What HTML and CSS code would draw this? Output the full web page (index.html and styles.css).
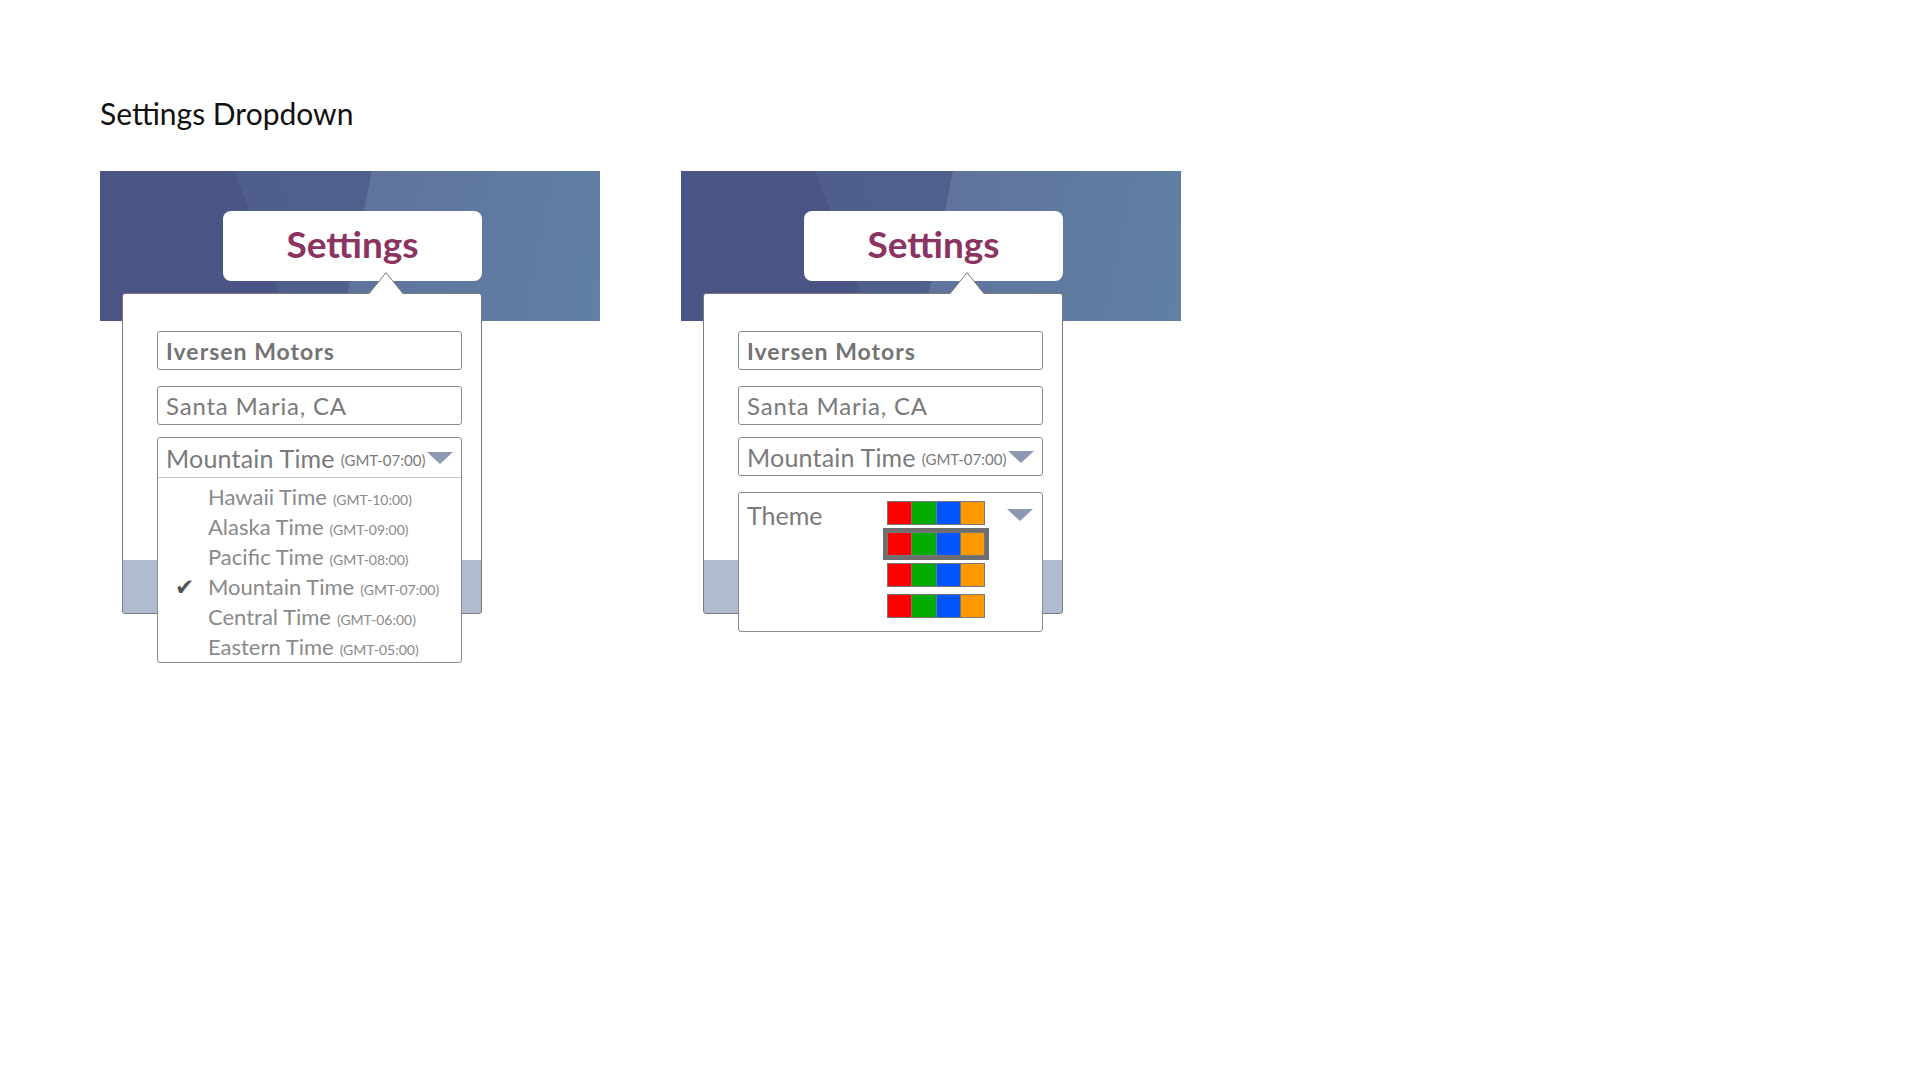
FILE: index.html
```html
<!DOCTYPE html>
<html lang="en">
<head>
<meta charset="utf-8">
<title>Settings Dropdown</title>
<link rel="stylesheet" href="styles.css">
</head>
<body>
<div class="page">
  <h1 class="title">Settings Dropdown</h1>
  <div class="demos">
    <div class="demo">
      <div class="banner">
        <div class="settings-btn">Settings</div>
      </div>
      <div class="panel">
        <svg class="caret" width="34" height="22" viewBox="0 0 34 22"><polygon points="0,22 17,0.5 34,22" fill="#fff"/><polyline points="0,21.5 17,0.7 34,21.5" fill="none" stroke="#7a7a7a" stroke-width="1"/></svg>
        <div class="field field-bold">Iversen Motors</div>
        <div class="field field-gap">Santa Maria, CA</div>
        <div class="select open">
          <div class="select-head"><span class="big">Mountain Time</span><span class="gmt">(GMT-07:00)</span><span class="tri"></span></div>
          <ul class="options">
            <li class="opt"><span class="check"></span>Hawaii Time <span class="gmt-s">(GMT-10:00)</span></li>
            <li class="opt"><span class="check"></span>Alaska Time <span class="gmt-s">(GMT-09:00)</span></li>
            <li class="opt"><span class="check"></span>Pacific Time <span class="gmt-s">(GMT-08:00)</span></li>
            <li class="opt"><span class="check">&#10004;</span>Mountain Time <span class="gmt-s">(GMT-07:00)</span></li>
            <li class="opt"><span class="check"></span>Central Time <span class="gmt-s">(GMT-06:00)</span></li>
            <li class="opt"><span class="check"></span>Eastern Time <span class="gmt-s">(GMT-05:00)</span></li>
          </ul>
        </div>
      </div>
    </div>
    <div class="demo">
      <div class="banner">
        <div class="settings-btn">Settings</div>
      </div>
      <div class="panel">
        <svg class="caret" width="34" height="22" viewBox="0 0 34 22"><polygon points="0,22 17,0.5 34,22" fill="#fff"/><polyline points="0,21.5 17,0.7 34,21.5" fill="none" stroke="#7a7a7a" stroke-width="1"/></svg>
        <div class="field field-bold">Iversen Motors</div>
        <div class="field field-gap">Santa Maria, CA</div>
        <div class="select">
          <div class="select-head"><span class="big">Mountain Time</span><span class="gmt">(GMT-07:00)</span><span class="tri"></span></div>
        </div>
        <div class="theme">
          <span class="theme-label">Theme</span>
          <div class="swatches">
            <div class="swatch"><i class="c-red"></i><i class="c-green"></i><i class="c-blue"></i><i class="c-orange"></i></div>
            <div class="swatch selected"><i class="c-red"></i><i class="c-green"></i><i class="c-blue"></i><i class="c-orange"></i></div>
            <div class="swatch"><i class="c-red"></i><i class="c-green"></i><i class="c-blue"></i><i class="c-orange"></i></div>
            <div class="swatch"><i class="c-red"></i><i class="c-green"></i><i class="c-blue"></i><i class="c-orange"></i></div>
          </div>
          <span class="tri theme-tri"></span>
        </div>
      </div>
    </div>
  </div>
</div>
</body>
</html>
```
FILE: styles.css
```css
* { box-sizing: border-box; }
html, body { margin: 0; padding: 0; background: #fff; }
body { font-family: "Lato", "Noto Sans", sans-serif; color: #7a7a7a; min-height: 1080px; }

.page { padding: 95px 0 0 100px; }

.title {
  margin: 0 0 40px 0;
  font-size: 30px;
  line-height: 36px;
  font-weight: 400;
  color: #111;
}

.demos { display: flex; gap: 81px; align-items: flex-start; }
.demo { width: 500px; }

.banner {
  height: 150px;
  padding: 40px 0 0 123px;
  background:
    linear-gradient(101.3deg, rgba(0,0,0,0) 51.3%, #5f739d 51.3%, #6180a3 100%),
    linear-gradient(69.9deg, #4a5586 34.2%, #4f5e8b 34.2%, #53648f 100%);
}

.settings-btn {
  width: 259px;
  height: 70px;
  border-radius: 8px;
  background: #fff;
  display: flex;
  align-items: center;
  justify-content: center;
  font-size: 37px;
  font-weight: 700;
  color: #8b3461;
  padding-bottom: 6px;
}

.panel {
  position: relative;
  width: 360px;
  height: 321px;
  margin: -28px 0 0 22px;
  border: 1px solid #7a7a7a;
  border-radius: 3px;
  padding: 37px 19px 0 34px;
  background: linear-gradient(to bottom, #fff 266px, #aebbd0 266px);
}

.caret { position: absolute; top: -22px; left: 246px; display: block; }

.field {
  height: 39px;
  border: 1px solid #8a8a8a;
  border-radius: 3px;
  background: #fff;
  padding-left: 8px;
  display: flex;
  align-items: center;
  font-size: 24px;
  letter-spacing: 0.8px;
  color: #7a7a7a;
}
.field-bold { font-weight: 700; font-size: 23px; letter-spacing: 1px; color: #737373; }
.field-gap { margin-top: 16px; }

.select {
  margin-top: 12px;
  border: 1px solid #8a8a8a;
  border-radius: 3px;
  background: #fff;
  position: relative;
}
.select-head {
  height: 37px;
  display: flex;
  align-items: center;
  padding: 0 8px 0 8px;
}
.select.open .select-head { height: 40px; border-bottom: 1px solid #c8c8c8; }
.big { font-size: 25px; letter-spacing: 0.2px; color: #7a7a7a; }
.gmt { font-size: 15px; margin-left: 6px; padding-top: 5px; color: #7a7a7a; }
.tri {
  width: 0; height: 0;
  border-left: 13px solid transparent;
  border-right: 13px solid transparent;
  border-top: 12px solid #8d99b3;
  margin-left: auto;
}

.options { list-style: none; margin: 0; padding: 4px 0 0 0; }
.opt {
  display: flex;
  align-items: baseline;
  height: 30px;
  line-height: 30px;
  font-size: 22px;
  color: #8a8a8a;
}
.check {
  width: 50px;
  padding-left: 17px;
  font-family: "DejaVu Sans", sans-serif;
  font-size: 23px;
  color: #555;
}
.gmt-s { font-size: 14px; margin-left: 6px; color: #8a8a8a; }

.theme {
  margin-top: 16px;
  height: 140px;
  border: 1px solid #8a8a8a;
  border-radius: 3px;
  background: #fff;
  display: flex;
  align-items: flex-start;
  padding: 8px 9px 0 8px;
}
.theme-label { width: 140px; font-size: 25px; line-height: 26px; padding-top: 1px; color: #7a7a7a; }
.swatches { display: flex; flex-direction: column; gap: 7px; }
.swatch {
  display: flex;
  gap: 1px;
  width: 98px;
  height: 24px;
  border: 1px solid #777;
  background: #777;
}
.swatch i { flex: 1; display: block; }
.swatch.selected { outline: 4px solid #6e6e6e; }
.c-red { background: #ff0000; }
.c-green { background: #00aa00; }
.c-blue { background: #0055ff; }
.c-orange { background: #ff9900; }
.theme-tri { margin-top: 8px; }
```
